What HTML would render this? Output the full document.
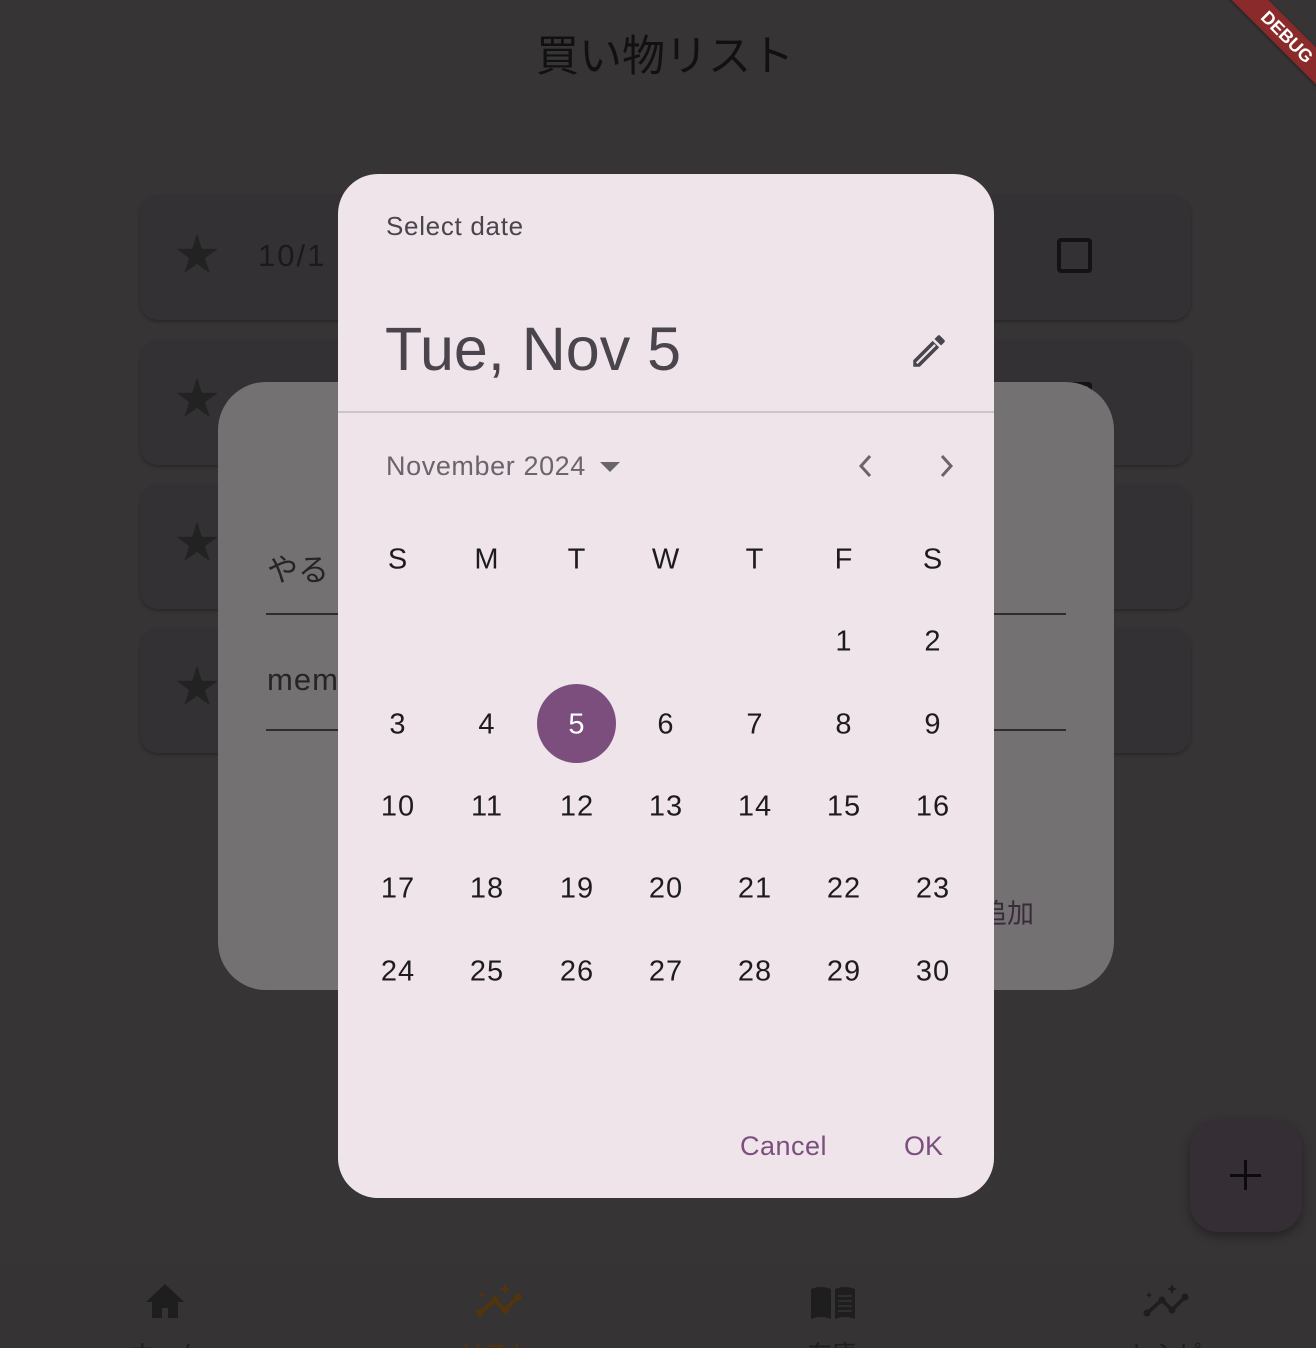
<!DOCTYPE html>
<html><head><meta charset="utf-8"><style>
*{margin:0;padding:0;box-sizing:border-box}
html,body{width:1316px;height:1348px;overflow:hidden}
body{background:#363435;position:relative;font-family:"Liberation Sans","Noto Sans CJK JP",sans-serif}
.abs{position:absolute}
.card{position:absolute;left:140px;width:1051px;height:125px;background:#333133;border-radius:18px;box-shadow:0 2px 3px rgba(0,0,0,.25)}
.star{position:absolute;left:175px;font-size:44px;color:#222;line-height:1}
.cal div.n{position:absolute;width:60px;text-align:center;font-size:29px;color:#1d1b1e;transform:translate(-30px,-50%);margin-top:2px;letter-spacing:1px}
</style></head><body>
<div class="abs" style="left:0;top:22px;width:1330px;text-align:center;font-size:43px;color:#111;font-family:'Noto Sans CJK JP',sans-serif">買い物リスト</div>

<div class="card" style="top:195px"></div>
<div class="card" style="top:340px"></div>
<div class="card" style="top:484px"></div>
<div class="card" style="top:628px"></div>
<div class="star" style="top:234px">★</div>
<div class="star" style="top:378px">★</div>
<div class="star" style="top:522px">★</div>
<div class="star" style="top:666px">★</div>
<div class="abs" style="left:258px;top:238px;font-size:31px;color:#1a1a1a;letter-spacing:2px">10/1</div>
<div class="abs" style="left:1057px;top:238px;width:35px;height:35px;border:4px solid #141214;border-radius:4px"></div>
<div class="abs" style="left:1057px;top:382px;width:35px;height:10px;border:4px solid #141214;border-bottom:none;border-radius:4px 4px 0 0"></div>

<!-- nav -->
<div class="abs" style="left:0;top:1262px;width:1316px;height:86px;background:#353334"></div>
<svg class="abs" style="left:0;top:1262px" width="1316" height="86" viewBox="0 1262 1316 86">
<path d="M165 1284L146 1302h6v16h10v-10h6v10h10v-16h6z" fill="#1e1e1e"/>
<g fill="#553508" stroke="#553508"><path d="M480 1313L495 1300L505 1310L518 1297" stroke-width="3.5" fill="none"/><circle cx="480" cy="1313" r="3"/><circle cx="495" cy="1300" r="3"/><circle cx="505" cy="1310" r="3"/><circle cx="518" cy="1297" r="3"/><path d="M505 1284l1.5 3.5 3.5 1.5-3.5 1.5-1.5 3.5-1.5-3.5-3.5-1.5 3.5-1.5z" stroke="none"/><path d="M482 1292l1 2 2 1-2 1-1 2-1-2-2-1 2-1z" stroke="none"/></g>
<g fill="#1e1e1e" stroke="#1e1e1e"><path d="M1147 1313L1162 1300L1172 1310L1185 1297" stroke-width="3.5" fill="none"/><circle cx="1147" cy="1313" r="3"/><circle cx="1162" cy="1300" r="3"/><circle cx="1172" cy="1310" r="3"/><circle cx="1185" cy="1297" r="3"/><path d="M1172 1284l1.5 3.5 3.5 1.5-3.5 1.5-1.5 3.5-1.5-3.5-3.5-1.5 3.5-1.5z" stroke="none"/><path d="M1149 1292l1 2 2 1-2 1-1 2-1-2-2-1 2-1z" stroke="none"/></g>
<path d="M811 1289q10-4 20 0v30q-10-4-20 0zM835 1289q10-4 20 0v30q-10-4-20 0z" fill="#1e1e1e"/><path d="M838 1296h14M838 1301h14M838 1306h14M838 1311h14" stroke="#353334" stroke-width="1.5"/>
</svg>
<div class="abs" style="left:130px;top:1334px;font-size:24px;color:#1e1e1e">ホーム</div>
<div class="abs" style="left:460px;top:1334px;font-size:24px;color:#553508">リスト</div>
<div class="abs" style="left:808px;top:1334px;font-size:24px;color:#1e1e1e">在庫</div>
<div class="abs" style="left:1130px;top:1334px;font-size:24px;color:#1e1e1e">レシピ</div>

<!-- FAB -->
<div class="abs" style="left:1190px;top:1120px;width:112px;height:112px;border-radius:28px;background:#352e34;box-shadow:0 4px 10px rgba(0,0,0,.35)"></div>
<div class="abs" style="left:1230px;top:1174px;width:31px;height:3px;background:#0c0a0c"></div>
<div class="abs" style="left:1244px;top:1160px;width:3px;height:30px;background:#0c0a0c"></div>

<!-- middle dialog -->
<div class="abs" style="left:218px;top:382px;width:896px;height:608px;background:#737172;border-radius:48px"></div>
<div class="abs" style="left:267px;top:545px;font-size:31px;color:#262426">やる</div>
<div class="abs" style="left:266px;top:613px;width:800px;height:2px;background:#2e2c2e"></div>
<div class="abs" style="left:267px;top:662px;font-size:31px;color:#262426;letter-spacing:1px">memo</div>
<div class="abs" style="left:266px;top:729px;width:800px;height:2px;background:#2e2c2e"></div>
<div class="abs" style="left:980px;top:892px;font-size:27px;color:#3a2a3a">追加</div>

<!-- debug -->
<div class="abs" style="left:1207px;top:24px;width:160px;height:26px;background:#8b2a2a;transform:rotate(45deg);color:#fff;font-size:18px;font-weight:bold;text-align:center;line-height:26px;box-shadow:0 1px 3px rgba(0,0,0,.4)">DEBUG</div>

<!-- date picker -->
<div class="abs cal" style="left:338px;top:174px;width:656px;height:1024px;background:#efe4ea;border-radius:40px">
<div class="abs" style="left:48px;top:37px;font-size:26px;color:#4a454c;letter-spacing:0.7px">Select date</div>
<div class="abs" style="left:47px;top:140px;font-size:61px;color:#4a454c">Tue, Nov 5</div>
<svg class="abs" style="left:570px;top:156px" width="42" height="42" viewBox="0 0 24 24"><path d="M3 17.25V21h3.75L17.81 9.94l-3.75-3.75L3 17.25zM20.71 7.04a1 1 0 000-1.41l-2.34-2.34a1 1 0 00-1.41 0l-1.83 1.83 3.75 3.75 1.83-1.83z" fill="#49454f"/><path d="M5 19l10.5-10.5" stroke="#efe4ea" stroke-width="1.2"/></svg>
<div class="abs" style="left:0;top:237px;width:656px;height:2px;background:#cdc4ca"></div>
<div class="abs" style="left:48px;top:277px;font-size:27px;color:#6a646c;letter-spacing:0.6px">November 2024</div>
<div class="abs" style="left:262px;top:288px;width:0;height:0;border-left:10px solid transparent;border-right:10px solid transparent;border-top:10px solid #6a646c"></div>
<svg class="abs" style="left:516px;top:278px" width="24" height="28" viewBox="0 0 24 28"><path d="M16 4L7 14l9 10" stroke="#6a646c" stroke-width="3" fill="none"/></svg>
<svg class="abs" style="left:596px;top:278px" width="24" height="28" viewBox="0 0 24 28"><path d="M8 4l9 10-9 10" stroke="#6a646c" stroke-width="3" fill="none"/></svg>
<div class="abs" style="left:199px;top:510px;width:79px;height:79px;border-radius:50%;background:#7b4e7e"></div>
<div class="n" style="left:60px;top:384px">S</div><div class="n" style="left:149px;top:384px">M</div><div class="n" style="left:239px;top:384px">T</div><div class="n" style="left:328px;top:384px">W</div><div class="n" style="left:417px;top:384px">T</div><div class="n" style="left:506px;top:384px">F</div><div class="n" style="left:595px;top:384px">S</div>
<div class="n" style="left:506px;top:466px">1</div><div class="n" style="left:595px;top:466px">2</div>
<div class="n" style="left:60px;top:549px">3</div><div class="n" style="left:149px;top:549px">4</div><div class="n" style="left:239px;top:549px;color:#fff">5</div><div class="n" style="left:328px;top:549px">6</div><div class="n" style="left:417px;top:549px">7</div><div class="n" style="left:506px;top:549px">8</div><div class="n" style="left:595px;top:549px">9</div>
<div class="n" style="left:60px;top:631px">10</div><div class="n" style="left:149px;top:631px">11</div><div class="n" style="left:239px;top:631px">12</div><div class="n" style="left:328px;top:631px">13</div><div class="n" style="left:417px;top:631px">14</div><div class="n" style="left:506px;top:631px">15</div><div class="n" style="left:595px;top:631px">16</div>
<div class="n" style="left:60px;top:713px">17</div><div class="n" style="left:149px;top:713px">18</div><div class="n" style="left:239px;top:713px">19</div><div class="n" style="left:328px;top:713px">20</div><div class="n" style="left:417px;top:713px">21</div><div class="n" style="left:506px;top:713px">22</div><div class="n" style="left:595px;top:713px">23</div>
<div class="n" style="left:60px;top:796px">24</div><div class="n" style="left:149px;top:796px">25</div><div class="n" style="left:239px;top:796px">26</div><div class="n" style="left:328px;top:796px">27</div><div class="n" style="left:417px;top:796px">28</div><div class="n" style="left:506px;top:796px">29</div><div class="n" style="left:595px;top:796px">30</div>
<div class="abs" style="left:402px;top:957px;font-size:27px;color:#7b4e7e;letter-spacing:0.5px">Cancel</div>
<div class="abs" style="left:566px;top:957px;font-size:27px;color:#7b4e7e">OK</div>
</div>
</body></html>
